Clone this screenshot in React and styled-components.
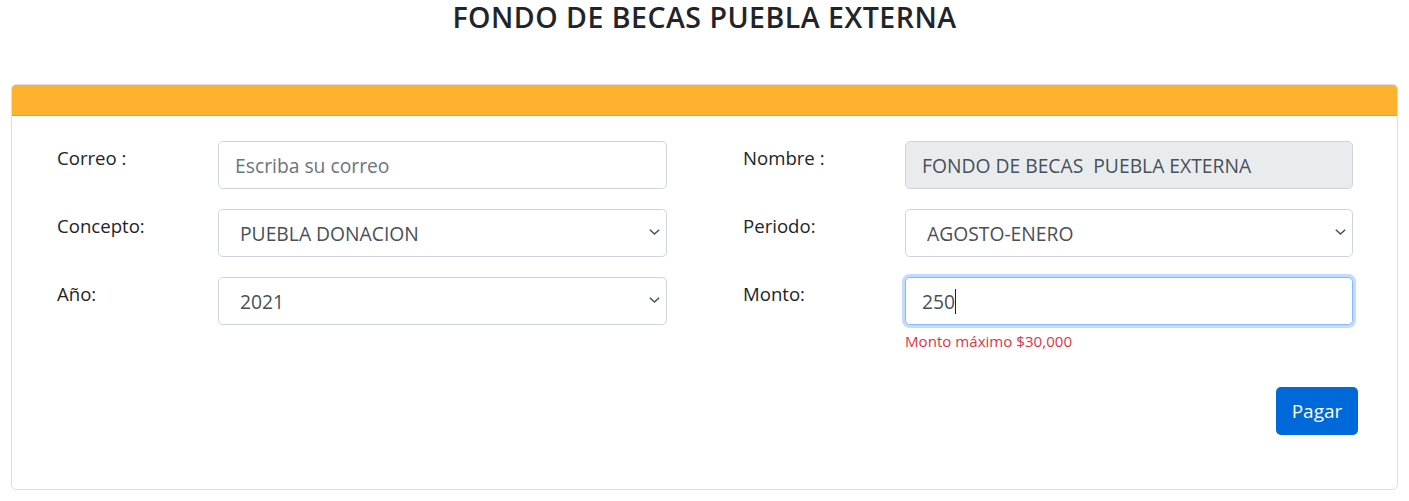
import React from "react";
import styled, { createGlobalStyle } from "styled-components";

const Global = createGlobalStyle`
  html, body { margin: 0; padding: 0; background: #fff; }
  body {
    font-family: "Open Sans", "Noto Sans", "Liberation Sans", sans-serif;
    color: #212529;
  }
  * { box-sizing: border-box; }
`;

const Page = styled.div`
  width: 1409px;
  padding: 0 11px;
`;

const TitleBar = styled.div`
  height: 84px;
  display: flex;
  justify-content: center;
  align-items: flex-start;
`;

const Title = styled.h3`
  margin: 0;
  font-size: 28.5px;
  font-weight: 600;
  line-height: 34px;
  text-align: center;
  color: #212529;
  letter-spacing: 0.5px;
`;

const Card = styled.div`
  border: 1px solid #dcdfe2;
  border-radius: 5px;
  overflow: hidden;
  height: 406px;
  display: flex;
  flex-direction: column;
`;

const CardHeader = styled.div`
  height: 31px;
  background: #ffb22e;
  border-bottom: 1px solid #e5a02a;
`;

const CardBody = styled.div`
  padding: 25px 44px 0 45px;
  display: flex;
  flex-direction: column;
`;

const Columns = styled.div`
  display: grid;
  grid-template-columns: 610px 610px;
  column-gap: 76px;
`;

const Column = styled.div`
  display: flex;
  flex-direction: column;
  gap: 20px;
`;

const Field = styled.div`
  display: grid;
  grid-template-columns: ${(p) => p.$labelWidth || 161}px 1fr;
  align-items: start;
`;

const Label = styled.label`
  font-size: 18.6px;
  line-height: 27px;
  padding-top: 3px;
  color: #212529;
`;

const Control = styled.div`
  position: relative;
  display: flex;
  flex-direction: column;
`;

const Input = styled.input`
  width: 100%;
  height: 48px;
  padding: 0 16px;
  font-family: inherit;
  font-size: 19.3px;
  color: #495057;
  background: ${(p) => (p.disabled ? "#e9ecef" : "#fff")};
  border: 1px solid ${(p) => (p.$focused ? "#86b7fe" : "#ced4da")};
  border-radius: 4.8px;
  outline: none;
  box-shadow: ${(p) => (p.$focused ? "0 0 0 3px rgba(13,110,253,0.25)" : "none")};
  caret-color: #212529;
  &::placeholder { color: #6c757d; opacity: 1; }
  &:disabled { opacity: 1; -webkit-text-fill-color: #495057; }
`;

const Select = styled.select`
  width: 100%;
  height: 48px;
  padding: 0 30px 0 21px;
  font-family: inherit;
  font-size: 19.3px;
  color: #495057;
  background: #fff;
  border: 1px solid #ced4da;
  border-radius: 4.8px;
  appearance: none;
  -webkit-appearance: none;
  outline: none;
`;

const Chevron = styled.svg`
  position: absolute;
  right: 7px;
  top: 20px;
  width: 11px;
  height: 6px;
  pointer-events: none;
`;

const Caret = styled.span`
  position: absolute;
  left: 50px;
  top: 12px;
  width: 1px;
  height: 25px;
  background: #212529;
`;

const Help = styled.small`
  margin-top: 5px;
  font-size: 15.1px;
  line-height: 22px;
  color: #dc3545;
`;

const Actions = styled.div`
  display: flex;
  justify-content: flex-end;
  margin-top: 35px;
  margin-right: -5px;
`;

const Button = styled.button`
  width: 82px;
  height: 48px;
  border: none;
  border-radius: 5px;
  background: #0069d9;
  color: #fff;
  font-family: inherit;
  font-size: 19px;
  font-weight: 500;
  cursor: pointer;
`;

const ChevronIcon = () => (
  <Chevron viewBox="0 0 11 6">
    <path d="M0.8 0.8 L5.5 5 L10.2 0.8" fill="none" stroke="#495057" strokeWidth="1.5" />
  </Chevron>
);

export default function App() {
  return (
    <>
      <Global />
      <Page>
        <TitleBar>
          <Title>FONDO DE BECAS PUEBLA EXTERNA</Title>
        </TitleBar>
        <Card>
          <CardHeader />
          <CardBody>
            <Columns>
              <Column>
                <Field>
                  <Label>Correo :</Label>
                  <Control>
                    <Input placeholder="Escriba su correo" />
                  </Control>
                </Field>
                <Field>
                  <Label>Concepto:</Label>
                  <Control>
                    <Select defaultValue="pd">
                      <option value="pd">PUEBLA DONACION</option>
                    </Select>
                    <ChevronIcon />
                  </Control>
                </Field>
                <Field>
                  <Label>Año:</Label>
                  <Control>
                    <Select defaultValue="2021">
                      <option value="2021">2021</option>
                    </Select>
                    <ChevronIcon />
                  </Control>
                </Field>
              </Column>
              <Column>
                <Field $labelWidth={162}>
                  <Label>Nombre :</Label>
                  <Control>
                    <Input disabled value="FONDO DE BECAS  PUEBLA EXTERNA" readOnly />
                  </Control>
                </Field>
                <Field $labelWidth={162}>
                  <Label>Periodo:</Label>
                  <Control>
                    <Select defaultValue="ae">
                      <option value="ae">AGOSTO-ENERO</option>
                    </Select>
                    <ChevronIcon />
                  </Control>
                </Field>
                <Field $labelWidth={162}>
                  <Label>Monto:</Label>
                  <Control>
                    <Input $focused defaultValue="250" />
                    <Caret />
                    <Help>Monto máximo $30,000</Help>
                  </Control>
                </Field>
              </Column>
            </Columns>
            <Actions>
              <Button>Pagar</Button>
            </Actions>
          </CardBody>
        </Card>
      </Page>
    </>
  );
}
